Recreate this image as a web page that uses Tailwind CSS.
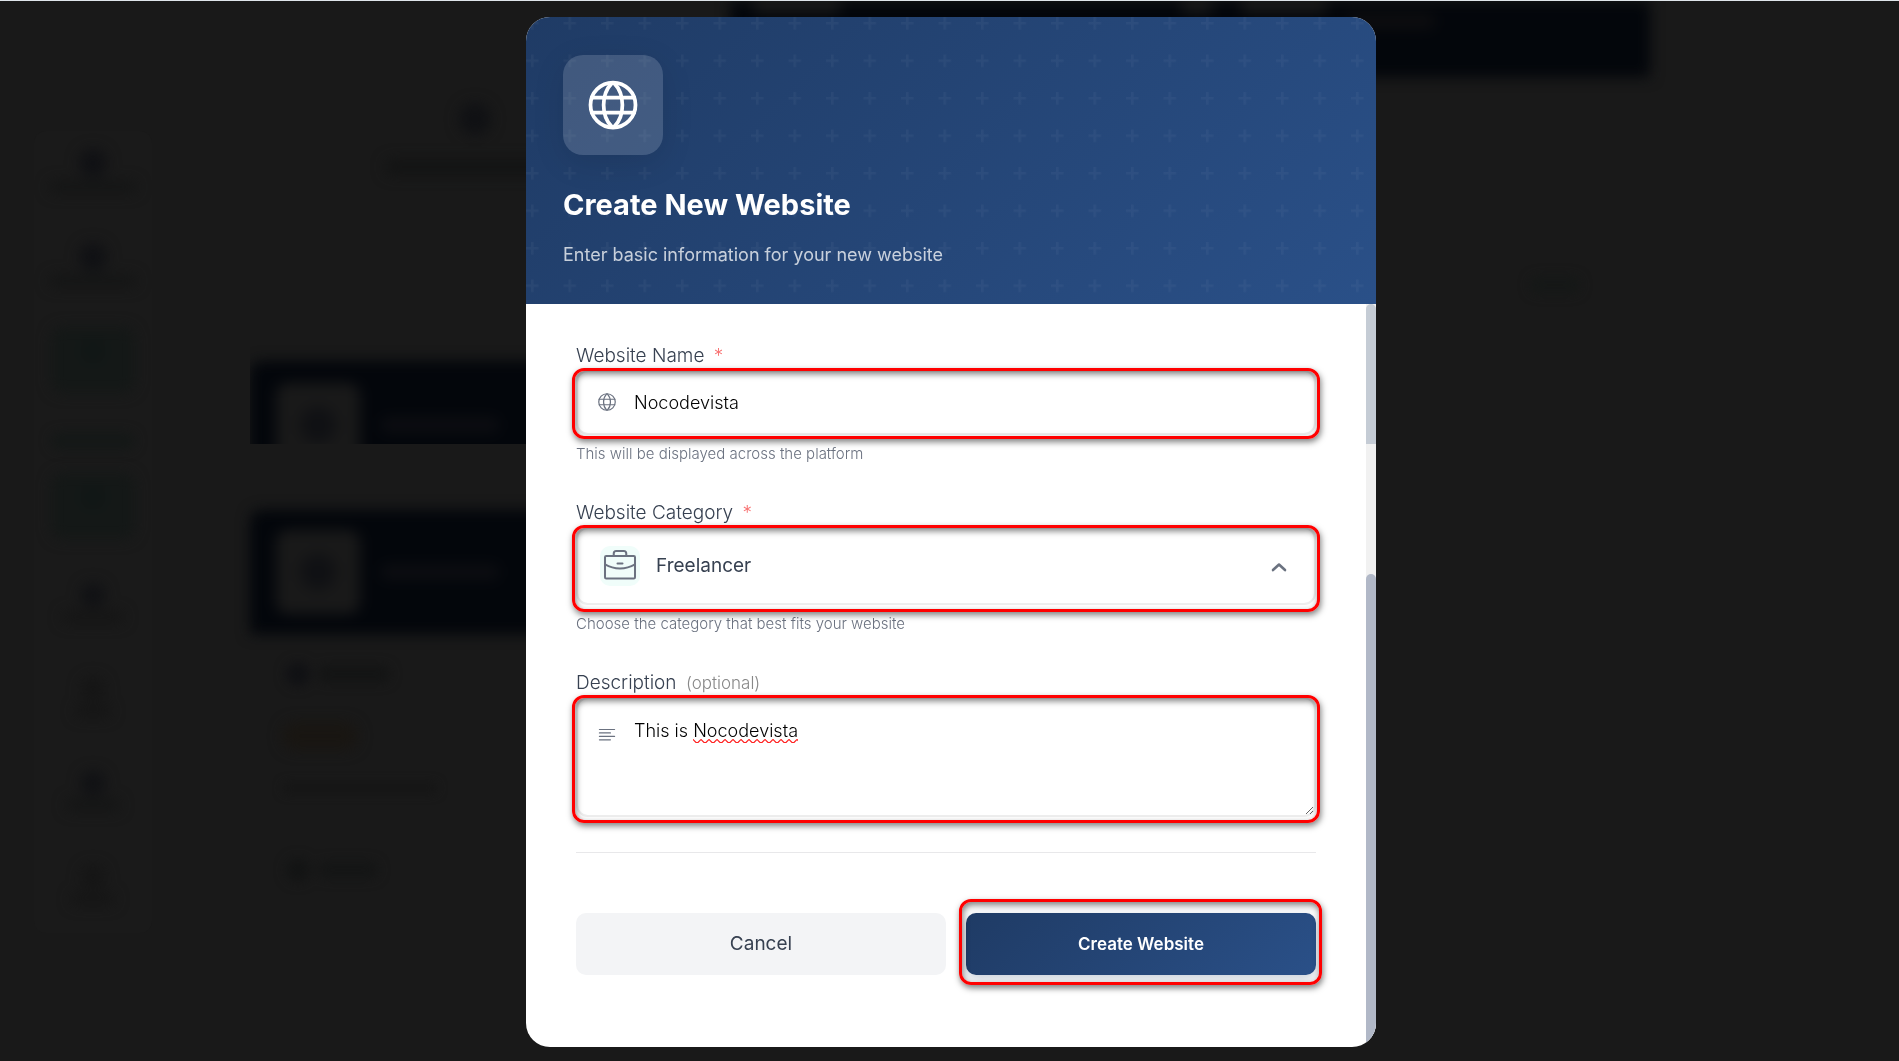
<!DOCTYPE html>
<html lang="en">
<head>
  <meta charset="UTF-8"/>
  <meta name="viewport" content="width=device-width, initial-scale=1.0"/>
  <title>Create New Website</title>
  <script src="https://cdn.jsdelivr.net/npm/@tailwindcss/browser@4"></script>
</head>
<body class="h-screen overflow-hidden bg-[#191919] pl-[3px] font-['Inter',sans-serif] text-[18px] leading-6 text-[#374151]">

  <!-- Dimmed page behind the modal -->
  <div aria-hidden="true" class="fixed inset-0 flex overflow-hidden border-t border-[#dfe5ea]">
    <div class="ml-[34px] mt-[130px] flex h-[802px] w-[118px] shrink-0 flex-col items-center rounded-xl bg-[#1a1a1a] pt-[18px]">
      <div class="h-[94px] blur-[7px]"><div class="mx-auto size-7 rounded-full bg-[#101114]"></div><div class="mt-1 h-3 w-[88px] rounded-full bg-[#141515]"></div></div>
      <div class="h-[84px] blur-[7px]"><div class="mx-auto size-7 rounded-full bg-[#101114]"></div><div class="mt-1 h-3 w-[88px] rounded-full bg-[#141515]"></div></div>
      <div class="h-[66px] w-[84px] rounded-xl bg-[#141817] pt-3 blur-[7px]"><div class="mx-auto size-6 rounded-full bg-[#101716]"></div></div>
      <div class="mt-10 h-4 w-[84px] rounded-xl bg-[#141817] blur-[6px]"></div>
      <div class="mt-6 h-[66px] w-[84px] rounded-xl bg-[#141817] pt-3 blur-[7px]"><div class="mx-auto size-6 rounded-full bg-[#101716]"></div></div>
      <div class="mt-11 h-[94px] blur-[7px]"><div class="mx-auto size-6 rounded-full bg-[#101114]"></div><div class="mt-1 h-3 w-[62px] rounded-full bg-[#151515]"></div></div>
      <div class="h-[94px] blur-[7px]"><div class="mx-auto size-6 rounded-full bg-[#151515]"></div><div class="mt-1 h-3 w-[36px] rounded-full bg-[#151515]"></div></div>
      <div class="h-[94px] blur-[7px]"><div class="mx-auto size-6 rounded-full bg-[#101114]"></div><div class="mt-1 h-3 w-[54px] rounded-full bg-[#141515]"></div></div>
      <div class="blur-[7px]"><div class="mx-auto size-6 rounded-full bg-[#151515]"></div><div class="mt-1 h-3 w-[44px] rounded-full bg-[#151515]"></div></div>
    </div>

    <div class="ml-[98px] w-[450px] shrink-0">
      <div class="flex h-[326px] flex-col items-center pt-[102px]">
        <div class="size-8 rounded-full bg-[#101114] blur-[7px]"></div>
        <div class="mt-6 h-4 w-[180px] rounded-full bg-[#131414] blur-[7px]"></div>
      </div>
      <div class="h-[117px] overflow-hidden">
        <div class="mt-[34px] flex h-[128px] items-center gap-5 rounded-xl bg-[#03060b] pl-[26px] blur-[7px]">
          <div class="flex size-[84px] items-center justify-center rounded-xl bg-[#191919]"><div class="size-9 rounded-full bg-[#101114]"></div></div>
          <div class="h-4 w-[120px] rounded-full bg-[#0c0d11]"></div>
        </div>
      </div>
      <div class="mt-[66px] flex h-[124px] items-center gap-5 rounded-t-xl bg-[#03060b] pl-[26px] blur-[7px]">
        <div class="flex size-[84px] items-center justify-center rounded-xl bg-[#191919]"><div class="size-9 rounded-full bg-[#101114]"></div></div>
        <div class="h-4 w-[120px] rounded-full bg-[#0c0d11]"></div>
      </div>
      <div class="mt-7 ml-9 flex items-center gap-2 blur-[6px]"><div class="size-6 rounded-full bg-[#101114]"></div><div class="h-4 w-[72px] rounded-full bg-[#131414]"></div></div>
      <div class="mt-9 ml-8 h-7 w-[76px] rounded-full bg-[#191612] blur-[7px]"></div>
      <div class="mt-8 ml-8 h-3 w-[156px] rounded-full bg-[#161616] blur-[5px]"></div>
      <div class="mt-[64px] ml-9 flex items-center gap-2 blur-[6px]"><div class="size-6 rounded-full bg-[#131414]"></div><div class="h-4 w-[60px] rounded-full bg-[#141515]"></div></div>
    </div>

    <div class="ml-[30px] w-[920px] shrink-0">
      <div class="flex h-[76px] bg-[#03060b] pl-[24px] blur-[7px]">
        <div class="h-3 w-[86px] bg-[#191919]"></div>
        <div class="ml-[342px] h-3 w-[30px] bg-[#191919]"></div>
        <div class="ml-[30px] h-3 w-[84px] bg-[#191919]"></div>
        <div class="mt-3 ml-[20px] h-4 w-[90px] rounded-full bg-[#0d0d0f]"></div>
      </div>
      <div class="mt-[200px] ml-[800px] h-4 w-[50px] rounded-full bg-[#151817] blur-[6px]"></div>
    </div>
  </div>

  <!-- Modal -->
  <main class="relative mx-auto mt-[17px] flex h-[calc(100vh-31px)] w-full max-w-[850px] flex-col overflow-hidden rounded-3xl bg-white">
    <header class="relative shrink-0 bg-linear-135 from-[#1f3b65] to-[#2a5088] px-[37px] pt-[38px] pb-[37px]">
      <svg class="absolute inset-0 size-full" aria-hidden="true">
        <defs>
          <pattern id="plus" width="37.5" height="37.5" patternUnits="userSpaceOnUse">
            <path d="M5 0h2.5v5h5v2.5h-5v5H5v-5H0V5h5z" fill="#fff" fill-opacity=".035"/>
          </pattern>
        </defs>
        <rect width="100%" height="100%" fill="url(#plus)"/>
      </svg>
      <div class="relative">
        <div class="flex size-[100px] items-center justify-center rounded-[20px] bg-white/15 shadow-[0_8px_32px_rgba(0,0,0,0.1)]">
          <svg class="size-[60px]" viewBox="0 0 256 256" fill="none" stroke="#fff" stroke-width="16" stroke-linecap="round" stroke-linejoin="round">
            <circle cx="128" cy="128" r="96"/>
            <path d="M88 128c0 37.46 13.33 70.92 34.28 92.49a8 8 0 0 0 11.44 0C154.67 198.92 168 165.46 168 128s-13.33-70.92-34.28-92.49a8 8 0 0 0-11.44 0C101.33 57.08 88 90.54 88 128Z"/>
            <path d="M37.5 96h181M37.5 160h181"/>
          </svg>
        </div>
        <h1 class="mt-8 text-[29px] leading-9 font-bold text-white">Create New Website</h1>
        <p class="mt-5 text-[18px] leading-6 text-white/75">Enter basic information for your new website</p>
      </div>
    </header>

    <div class="flex min-h-0 flex-1">
      <form class="min-w-0 flex-1 px-[50px] pt-10">
        <label for="siteName" class="block text-[19px] font-light">Website Name <span class="ml-1 text-[#f87171]">*</span></label>
        <div class="relative mt-0.5">
          <input id="siteName" type="text" value="Nocodevista" class="block h-[65px] w-full rounded-xl border-2 border-[#eeeeee] bg-white pl-14 font-light text-black outline-none"/>
          <svg class="absolute top-[21px] left-5 size-[22px]" viewBox="0 0 256 256" fill="none" stroke="#6b7280" stroke-width="14" stroke-linecap="round" stroke-linejoin="round">
            <circle cx="128" cy="128" r="96"/>
            <path d="M88 128c0 37.46 13.33 70.92 34.28 92.49a8 8 0 0 0 11.44 0C154.67 198.92 168 165.46 168 128s-13.33-70.92-34.28-92.49a8 8 0 0 0-11.44 0C101.33 57.08 88 90.54 88 128Z"/>
            <path d="M37.5 96h181M37.5 160h181"/>
          </svg>
          <div class="pointer-events-none absolute -inset-x-1 -top-0.5 -bottom-1 rounded-xl border-3 border-[#ff0000] shadow-[1px_3px_6px_rgba(0,0,0,0.5),inset_1px_3px_6px_rgba(0,0,0,0.5)]"></div>
        </div>
        <p class="mt-[9px] text-[15px] leading-5 font-light text-[#6b7280]">This will be displayed across the platform</p>

        <label for="category" class="mt-[37px] block text-[19px] font-light">Website Category <span class="ml-1 text-[#f87171]">*</span></label>
        <div class="relative mt-0.5">
          <select id="category" class="block h-[78px] w-full appearance-none rounded-xl border-2 border-[#eeeeee] bg-white pl-[78px] text-[19px] text-[#374151] outline-none">
            <option>Freelancer</option>
          </select>
          <div class="pointer-events-none absolute top-[19px] left-6 size-10 rounded-[10px] bg-[#f0fdfa]">
            <svg class="size-10" viewBox="0 0 256 256" fill="none" stroke="#6b7280" stroke-width="13" stroke-linecap="round" stroke-linejoin="round">
              <rect x="32" y="64" width="192" height="144" rx="8"/>
              <path d="M168 64V48a16 16 0 0 0-16-16h-48a16 16 0 0 0-16 16v16M224 118.3a191 191 0 0 1-96 25.7 191 191 0 0 1-96-25.7M112 112h32"/>
            </svg>
          </div>
          <svg class="pointer-events-none absolute top-[34px] right-[29px] h-3 w-4" viewBox="0 0 16 12" fill="none" stroke="#6b7280" stroke-width="2.6" stroke-linecap="round" stroke-linejoin="round">
            <path d="M2 9 8 3.500 14 9"/>
          </svg>
          <div class="pointer-events-none absolute -inset-x-1 -top-0.5 -bottom-[7px] rounded-xl border-3 border-[#ff0000] shadow-[1px_3px_6px_rgba(0,0,0,0.5),inset_1px_3px_6px_rgba(0,0,0,0.5)]"></div>
        </div>
        <p class="mt-[9px] text-[15px] leading-5 font-light text-[#6b7280]">Choose the category that best fits your website</p>

        <label for="description" class="mt-[37px] block text-[19px] font-light">Description <span class="ml-1 text-[17px] text-[#888888]">(optional)</span></label>
        <div class="relative mt-0.5">
          <textarea id="description" spellcheck="false" class="block h-[120px] w-full resize-y rounded-xl border-2 border-[#eeeeee] bg-white pt-5 pl-14 font-light text-black outline-none">This is Nocodevista</textarea>
          <svg class="absolute top-[27px] left-5 size-[22px]" viewBox="0 0 256 256" fill="none" stroke="#6b7280" stroke-width="14" stroke-linecap="round">
            <path d="M40 64h176M40 104h128M40 144h176M40 184h128"/>
          </svg>
          <!-- spell-check underline -->
          <svg class="pointer-events-none absolute top-[42px] left-[117px] h-1 w-[105px]" aria-hidden="true">
            <defs>
              <pattern id="wave" width="8" height="4" patternUnits="userSpaceOnUse">
                <path d="M-2 .5 0 .5 3 3.500 5 3.500 8 .5" fill="none" stroke="#ff2020" stroke-width="1.2"/>
              </pattern>
            </defs>
            <rect width="100%" height="4" fill="url(#wave)"/>
          </svg>
          <div class="pointer-events-none absolute -inset-x-1 -top-0.5 -bottom-1.5 rounded-xl border-3 border-[#ff0000] shadow-[1px_3px_6px_rgba(0,0,0,0.5),inset_1px_3px_6px_rgba(0,0,0,0.5)]"></div>
        </div>

        <div class="mt-[35px] flex gap-5 border-t border-[#e8e8ea] pt-[60px]">
          <button type="button" class="h-[62px] flex-[37] rounded-[10px] bg-[#f3f4f6] text-[19px] text-[#374151]">Cancel</button>
          <div class="relative flex-[35]">
            <button type="submit" class="block h-[62px] w-full rounded-[10px] bg-linear-135 from-[#1f3b65] to-[#2a5088] text-[17px] font-semibold text-white shadow-[0_4px_12px_rgba(31,59,101,0.25)]">Create Website</button>
            <div class="pointer-events-none absolute -top-3.5 -right-1.5 -bottom-[10px] -left-[7px] rounded-xl border-3 border-[#ff0000] shadow-[1px_3px_6px_rgba(0,0,0,0.5),inset_1px_3px_6px_rgba(0,0,0,0.5)]"></div>
          </div>
        </div>
      </form>

      <!-- Scrollbar -->
      <div aria-hidden="true" class="flex w-[10px] shrink-0 flex-col bg-[#f1f1f1]">
        <div class="h-[140px] rounded-t-full bg-[#c5ccd5]"></div>
        <div class="mt-[130px] flex-1 rounded-t-full bg-[#b1b8c7]"></div>
      </div>
    </div>
  </main>
</body>
</html>
